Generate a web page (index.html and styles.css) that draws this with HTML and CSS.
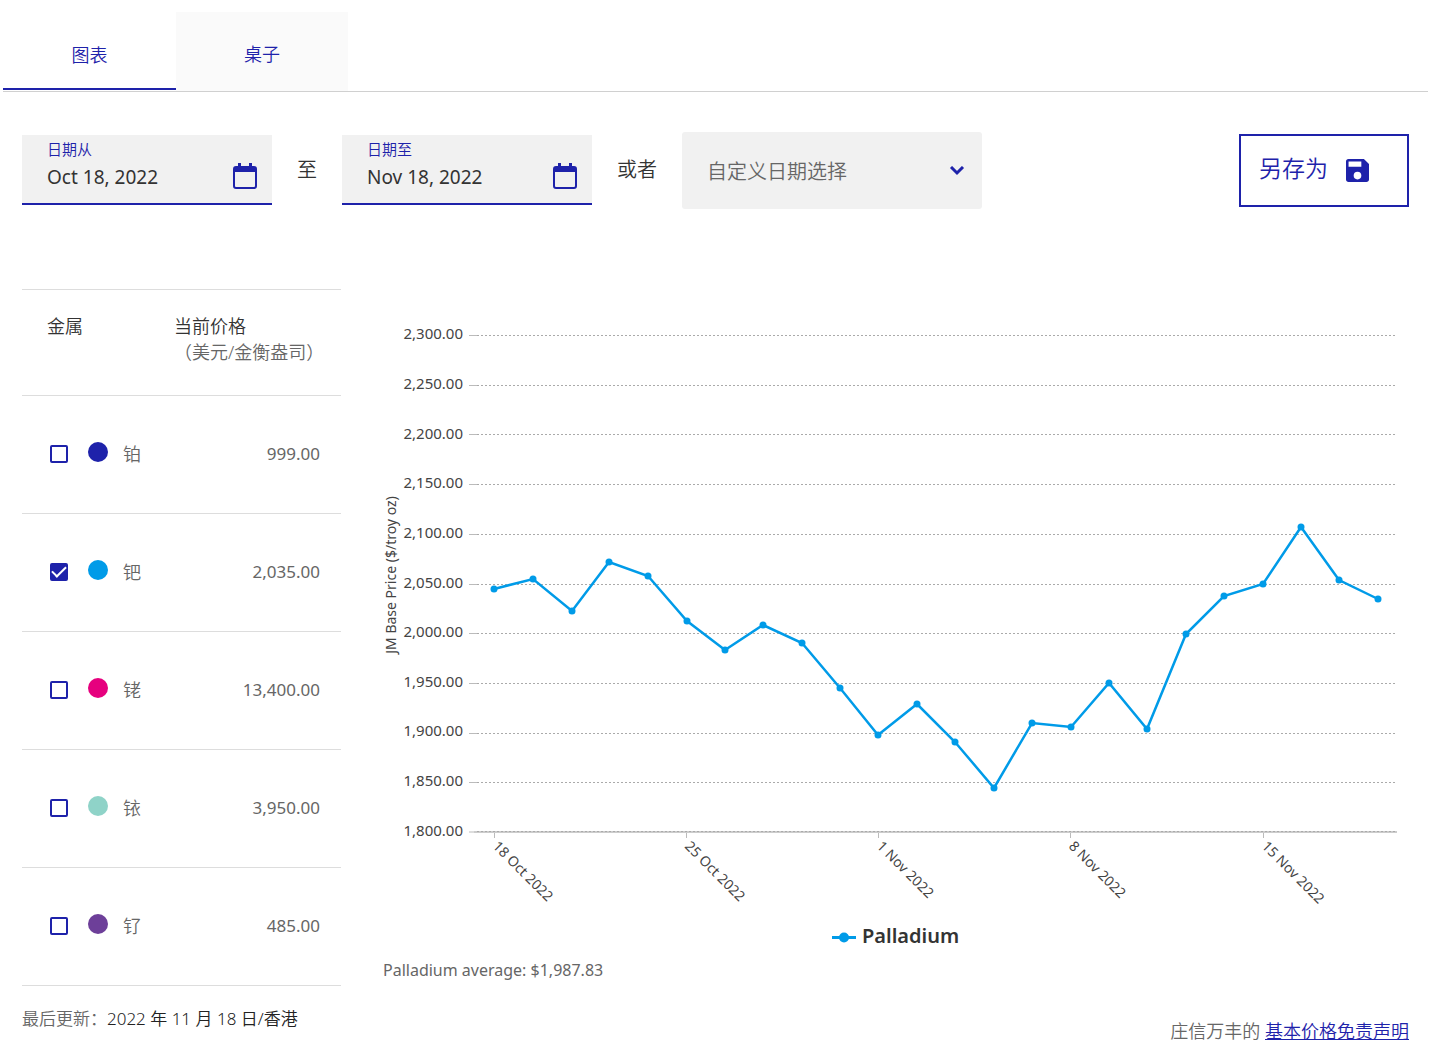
FILE: index.html
```html
<!DOCTYPE html>
<html lang="zh-CN">
<head>
<meta charset="utf-8">
<meta name="viewport" content="width=device-width, initial-scale=1">
<title>价格图表</title>
<link rel="stylesheet" href="styles.css">
</head>
<body>
<main class="page">
  <nav class="tabs" role="tablist">
    <button class="tab tab-active" type="button" role="tab" aria-selected="true">图表</button>
    <button class="tab" type="button" role="tab" aria-selected="false">桌子</button>
  </nav>

  <div class="panel">
    <form class="controls">
      <div class="field">
        <label class="field-label" for="date-from">日期从</label>
        <div class="field-row">
          <input class="field-input" id="date-from" type="text" value="Oct 18, 2022">
          <svg class="calendar" viewBox="0 0 24 26" aria-hidden="true"><path d="M5 0h3v3h8V0h3v3h2a3 3 0 0 1 3 3v17a3 3 0 0 1-3 3H3a3 3 0 0 1-3-3V6a3 3 0 0 1 3-3h2zM2 9v14q0 1 1 1h18q1 0 1-1V9z" fill-rule="evenodd"/></svg>
        </div>
      </div>
      <span class="joiner">至</span>
      <div class="field">
        <label class="field-label" for="date-to">日期至</label>
        <div class="field-row">
          <input class="field-input" id="date-to" type="text" value="Nov 18, 2022">
          <svg class="calendar" viewBox="0 0 24 26" aria-hidden="true"><path d="M5 0h3v3h8V0h3v3h2a3 3 0 0 1 3 3v17a3 3 0 0 1-3 3H3a3 3 0 0 1-3-3V6a3 3 0 0 1 3-3h2zM2 9v14q0 1 1 1h18q1 0 1-1V9z" fill-rule="evenodd"/></svg>
        </div>
      </div>
      <label class="joiner" for="range">或者</label>
      <div class="select-box">
        <select class="select" id="range"><option>自定义日期选择</option></select>
        <svg class="chevron" viewBox="0 0 16 10" aria-hidden="true"><path d="M2 1l6 6 6-6"/></svg>
      </div>
      <button class="save" type="button">
        <span class="save-text">另存为</span>
        <svg class="save-icon" viewBox="3 3 18 18" aria-hidden="true"><path d="M17 3H5a2 2 0 0 0-2 2v14c0 1.100.900 2 2 2h14c1.100 0 2-.900 2-2V7zm-5 16a3 3 0 1 1 0-6 3 3 0 0 1 0 6zm3-10H5V5h10z"/></svg>
      </button>
    </form>

    <div class="content">
      <section class="prices">
        <table class="metals">
          <thead>
            <tr><th class="metal-head">金属</th><th class="price-head">当前价格<span class="unit">（美元/金衡盎司）</span></th></tr>
          </thead>
          <tbody>
            <tr><td><label class="metal"><input class="check" type="checkbox"><span class="dot platinum"></span><span class="name">铂</span></label></td><td class="price">999.00</td></tr>
            <tr><td><label class="metal"><input class="check" type="checkbox" checked><span class="dot palladium"></span><span class="name">钯</span></label></td><td class="price">2,035.00</td></tr>
            <tr><td><label class="metal"><input class="check" type="checkbox"><span class="dot rhodium"></span><span class="name">铑</span></label></td><td class="price">13,400.00</td></tr>
            <tr><td><label class="metal"><input class="check" type="checkbox"><span class="dot iridium"></span><span class="name">铱</span></label></td><td class="price">3,950.00</td></tr>
            <tr><td><label class="metal"><input class="check" type="checkbox"><span class="dot ruthenium"></span><span class="name">钌</span></label></td><td class="price">485.00</td></tr>
          </tbody>
        </table>
        <p class="updated">最后更新：<span class="updated-date">2022 年 11 月 18 日/香港</span></p>
      </section>

      <section class="chart-area">
        <svg class="chart" viewBox="0 0 1026 640" role="img" aria-label="Palladium">
          <path class="grid" d="M94 25.500H1014M94 75.500H1014M94 124.500H1014M94 174.500H1014M94 224.500H1014M94 274.500H1014M94 323.500H1014M94 373.500H1014M94 423.500H1014M94 472.500H1014"/>
          <path class="tick" d="M86 25.500h8M86 75.500h8M86 124.500h8M86 174.500h8M86 224.500h8M86 274.500h8M86 323.500h8M86 373.500h8M86 423.500h8M86 472.500h8M86 522h8M111.500 522v6M303.500 522v6M495.500 522v6M687.500 522v6M880.500 522v6"/>
          <path class="axis" d="M91 522H1014"/>
          <path class="grid" d="M94 521.500H1014"/>
          <g class="y-labels">
            <text x="80" y="29">2,300.00</text>
            <text x="80" y="79">2,250.00</text>
            <text x="80" y="129">2,200.00</text>
            <text x="80" y="178">2,150.00</text>
            <text x="80" y="228">2,100.00</text>
            <text x="80" y="278">2,050.00</text>
            <text x="80" y="327">2,000.00</text>
            <text x="80" y="377">1,950.00</text>
            <text x="80" y="426">1,900.00</text>
            <text x="80" y="476">1,850.00</text>
            <text x="80" y="526">1,800.00</text>
          </g>
          <text class="axis-title" transform="translate(13 265) rotate(-90)">JM Base Price ($/troy oz)</text>
          <g class="x-labels">
            <text transform="translate(109 537) rotate(45)">18 Oct 2022</text>
            <text transform="translate(301 537) rotate(45)">25 Oct 2022</text>
            <text transform="translate(493 537) rotate(45)">1 Nov 2022</text>
            <text transform="translate(685 537) rotate(45)">8 Nov 2022</text>
            <text transform="translate(878 537) rotate(45)">15 Nov 2022</text>
          </g>
          <defs>
            <marker id="point" markerUnits="userSpaceOnUse" markerWidth="8" markerHeight="8" refX="4" refY="4"><circle class="marker" cx="4" cy="4" r="3.500"/></marker>
          </defs>
          <polyline class="series" stroke-width="2.500" points="111,279 150,269 189,301 226,252 265,266 304,311 342,340 380,315 419,333 457,378 495,425 534,394 572,432 611,478 649,413 688,417 726,373 764,419 803,324 841,286 880,274 918,217 956,270 995,289"/>
          <path class="legend-line" d="M449 627.500h24"/>
          <circle class="marker" cx="461" cy="627.500" r="5"/>
          <text class="legend" x="479" y="633">Palladium</text>
        </svg>
        <p class="average">Palladium average: $1,987.83</p>
        <p class="disclaimer">庄信万丰的 <a class="link" href="#">基本价格免责声明</a></p>
      </section>
    </div>
  </div>
</main>
</body>
</html>
```
FILE: styles.css
```css
* { box-sizing: border-box; }

body {
  margin: 0;
  background: #fff;
  color: #666;
  font-family: "Noto Sans", "Noto Sans CJK SC", sans-serif;
  font-size: 17px;
  font-weight: 350;
}

button, input, select { font: inherit; border-radius: 0; }

p { margin: 0; }

.page { padding: 12px 13px 0 3px; }

.tabs { display: flex; border-bottom: 1px solid #d0d0d0; }

.tab {
  width: 172px;
  height: 79px;
  padding: 3px 0 0;
  border: 0;
  background: #fafafa;
  color: #1e22aa;
  font-size: 18px;
}

.tab-active {
  width: 173px;
  height: 78px;
  padding-top: 8px;
  border-bottom: 2px solid #1e22aa;
  background: #fff;
}

.panel { padding: 40px 19px 0; }

.controls { display: flex; align-items: center; gap: 25px; }

.field {
  width: 250px;
  height: 70px;
  margin-bottom: 2px;
  padding: 2px 15px 0 25px;
  border-bottom: 2px solid #1e22aa;
  background: #f1f1f1;
}

.field-label { display: block; color: #1e22aa; font-size: 15px; line-height: 24px; }

.field-row { display: flex; align-items: center; justify-content: space-between; }

.field-input {
  width: 160px;
  height: 32px;
  padding: 0;
  border: 0;
  background: none;
  color: #333;
  font-size: 19px;
  font-weight: 400;
}

.calendar { width: 24px; height: 26px; margin-bottom: 2px; fill: #1e22aa; }

.joiner { margin-bottom: 2px; color: #333; font-size: 20px; line-height: 24px; }

.select-box { display: grid; width: 300px; align-items: center; }

.select {
  grid-area: 1 / 1;
  height: 77px;
  padding: 2px 25px 0;
  border: 0;
  border-radius: 3px;
  appearance: none;
  background: #f1f1f1;
  color: #666;
  font-size: 20px;
}

.chevron {
  grid-area: 1 / 1;
  justify-self: end;
  width: 16px;
  height: 10px;
  margin-right: 17px;
  fill: none;
  stroke: #1e22aa;
  stroke-width: 3;
  pointer-events: none;
}

.save {
  display: flex;
  align-items: center;
  gap: 18px;
  width: 170px;
  height: 73px;
  margin-left: auto;
  padding: 0 18px;
  border: 2px solid #1e22aa;
  background: #fff;
  color: #1e22aa;
  font-size: 23px;
}

.save-text { padding-bottom: 8px; }

.save-icon { width: 23px; height: 23px; fill: #1e22aa; }

.content {
  display: grid;
  grid-template-columns: 319px 1fr;
  gap: 42px;
  padding-top: 80px;
}

.metals { width: 100%; border-collapse: collapse; border-top: 1px solid #ddd; }

.metals tr { height: 118px; border-bottom: 1px solid #ddd; }

.metals thead tr { height: 106px; }

.metals th {
  padding: 23px 0 0;
  color: #333;
  font-size: 18px;
  font-weight: 350;
  line-height: 26px;
  text-align: left;
  vertical-align: top;
}

.metals .metal-head { width: 152px; padding-left: 25px; }

.unit { display: block; color: #666; white-space: nowrap; }

.metals td { padding: 0 0 2px; }

.metal {
  display: flex;
  align-items: center;
  padding-left: 28px;
  font-size: 18px;
}

.name { padding-bottom: 2px; }

.check {
  display: grid;
  place-items: center;
  width: 18px;
  height: 18px;
  margin: 0 20px 0 0;
  border: 2px solid #1e22aa;
  border-radius: 2px;
  appearance: none;
}

.check:checked { background: #1e22aa; }

.check:checked::after {
  content: "";
  width: 12px;
  height: 6px;
  margin-bottom: 4px;
  border: solid #fff;
  border-width: 0 0 2px 2px;
  transform: rotate(-45deg);
}

.dot { width: 20px; height: 20px; margin: 0 15px 3px 0; border-radius: 50%; }
.platinum { background: #1e22aa; }
.palladium { background: #009be8; }
.rhodium { background: #e6007e; }
.iridium { background: #8fd3c8; }
.ruthenium { background: #6d3f99; }

.metals .price { padding-right: 21px; text-align: right; font-weight: 400; }

.updated { padding-top: 20px; line-height: 26px; }

.updated-date { color: #222; }

.chart-area { padding-top: 21px; }

.chart { display: block; width: 100%; height: auto; overflow: visible; }

.grid { fill: none; stroke: #aaa; stroke-dasharray: 2 2; }

.tick { fill: none; stroke: #bbb; }

.axis { fill: none; stroke: #ccc; stroke-width: 2; }

.y-labels { fill: #444; font-size: 15px; font-weight: 400; text-anchor: end; }

.x-labels { fill: #444; font-size: 14px; font-weight: 400; }

.axis-title { fill: #444; font-size: 14px; font-weight: 400; text-anchor: middle; }

.series {
  fill: none;
  stroke: #009be8;
  marker-start: url(#point);
  marker-mid: url(#point);
  marker-end: url(#point);
}

.marker { fill: #009be8; }

.legend-line { stroke: #009be8; stroke-width: 3; }

.legend { fill: #333; font-size: 20px; font-weight: 600; }

.average { padding-top: 8px; font-size: 16px; line-height: 24px; font-weight: 400; }

.disclaimer { padding-top: 37px; font-size: 18px; line-height: 24px; text-align: right; }

.link { color: #1e22aa; }
```
